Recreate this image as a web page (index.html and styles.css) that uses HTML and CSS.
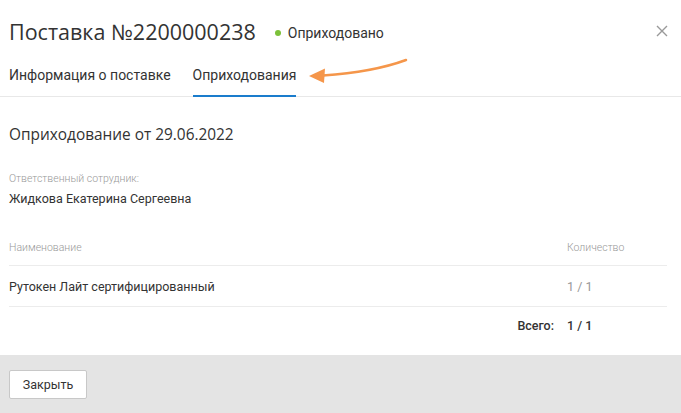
FILE: index.html
```html
<!DOCTYPE html>
<html lang="ru">
<head>
<meta charset="utf-8">
<link rel="stylesheet" href="styles.css">
</head>
<body>
<div class="modal">
  <div class="head">
    <div class="title-row">
      <h1 class="title">Поставка №2200000238</h1>
      <span class="status"><span class="dot"></span>Оприходовано</span>
      <span class="close"><svg width="12" height="12" viewBox="0 0 12 12"><path d="M1 1L11 11M11 1L1 11" stroke="#999" stroke-width="1.4"/></svg></span>
    </div>
    <div class="tabs">
      <span class="tab">Информация о поставке</span>
      <span class="tab active">Оприходования</span>
      <svg class="arrow" width="110" height="30" viewBox="0 0 110 30"><path d="M101 3 C82 10 55 16 18 18.5" fill="none" stroke="#f5964a" stroke-width="2.5" stroke-linecap="round"/><path d="M4 19 L20 11.5 L19 26 Z" fill="#f5964a"/></svg>
    </div>
  </div>
  <div class="body">
    <h2 class="sub">Оприходование от 29.06.2022</h2>
    <div class="label">Ответственный сотрудник:</div>
    <div class="value">Жидкова Екатерина Сергеевна</div>
    <div class="table">
      <div class="row thead"><span class="c-name">Наименование</span><span class="c-qty">Количество</span></div>
      <div class="row item"><span class="c-name">Рутокен Лайт сертифицированный</span><span class="c-qty muted">1 / 1</span></div>
      <div class="row total"><span class="c-name total-label">Всего:</span><span class="c-qty strong">1 / 1</span></div>
    </div>
  </div>
  <div class="foot">
    <button class="btn">Закрыть</button>
  </div>
</div>
</body>
</html>
```
FILE: styles.css
```css
html, body { margin: 0; padding: 0; background: #fff; }
body { font-family: Roboto, "Noto Sans", sans-serif; color: #333; width: 681px; height: 413px; overflow: hidden; }
.modal { display: flex; flex-direction: column; height: 413px; }
.head { border-bottom: 1px solid #e8e8e8; padding: 0 9px; }
.title-row { display: flex; align-items: center; height: 60px; padding-top: 1px; }
.title { margin: 0; font-weight: 400; font-size: 21.5px; color: #333; font-family: "Open Sans", Roboto, sans-serif; }
.status { display: flex; align-items: center; margin-left: 19px; font-size: 14px; color: #333; margin-top: 3px; }
.dot { width: 6px; height: 6px; border-radius: 50%; background: #7cc13a; margin-right: 7px; }
.close { margin-left: auto; margin-right: 4px; display: flex; }
.tabs { display: flex; align-items: stretch; height: 35px; position: relative; }
.tab { font-size: 14px; color: #333; display: flex; align-items: center; padding-bottom: 6px; border-bottom: 2px solid transparent; margin-bottom: -1px; }
.tab + .tab { margin-left: 22px; }
.tab.active { border-bottom-color: #1a7ccc; }
.arrow { position: absolute; left: 296px; top: -4px; }
.body { flex: 1; padding: 0 9px; }
.sub { margin: 26px 0 0 0; font-weight: 400; font-size: 15.4px; color: #333; font-family: "Open Sans", Roboto, sans-serif; height: 24px; line-height: 24px; }
.label { margin-top: 25px; font-size: 10.5px; color: #999; font-weight: 300; line-height: 14px; }
.value { margin-top: 5px; font-size: 12.5px; color: #333; line-height: 16px; }
.table { margin-top: 29px; width: 658px; }
.row { display: flex; align-items: center; }
.thead { border-bottom: 1px solid #ececec; font-size: 10.5px; color: #999; font-weight: 300; align-items: flex-start; padding-top: 5px; box-sizing: border-box; height: 30px; }
.item { height: 40px; border-bottom: 1px solid #ececec; font-size: 12.5px; }
.total { height: 36px; font-size: 12.5px; }
.c-name { flex: 1; }
.c-qty { width: 100px; }
.muted { color: #999; }
.strong { font-weight: 500; color: #333; }
.total-label { text-align: right; padding-right: 13px; font-weight: 500; }
.foot { height: 58px; background: #e4e4e4; display: flex; align-items: center; padding: 0 9px; }
.btn { font-family: Roboto, sans-serif; font-size: 12.5px; color: #333; background: #fff; border: 1px solid #c8c8c8; border-radius: 2px; height: 29px; width: 78px; padding: 0; }
```
